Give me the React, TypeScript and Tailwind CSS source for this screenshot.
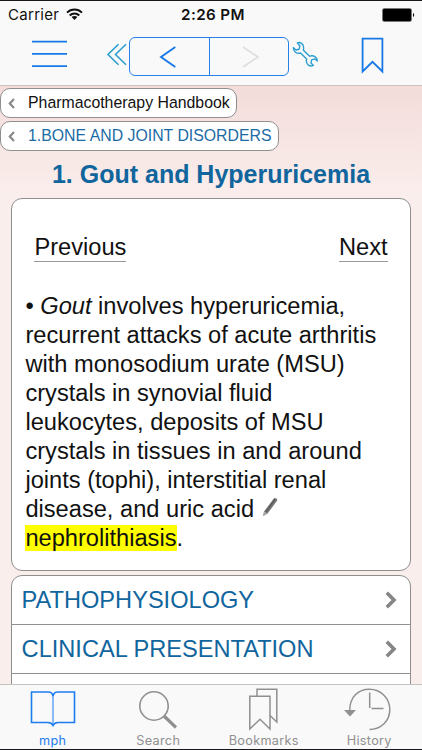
import type { ReactNode } from "react";

interface Crumb {
  label: string;
  className: string;
}

interface Tab {
  label: string;
  icon: ReactNode;
  active?: boolean;
}

const crumbs: Crumb[] = [
  { label: "Pharmacotherapy Handbook", className: "w-[237px] text-[#111]" },
  { label: "1.BONE AND JOINT DISORDERS", className: "w-[279px] text-[#1c6ba5]" },
];

const paragraph = [
  "recurrent attacks of acute arthritis",
  "with monosodium urate (MSU)",
  "crystals in synovial fluid",
  "leukocytes, deposits of MSU",
  "crystals in tissues in and around",
  "joints (tophi), interstitial renal",
];

const sections = ["PATHOPHYSIOLOGY", "CLINICAL PRESENTATION"];

const tabs: Tab[] = [
  {
    label: "mph",
    active: true,
    icon: (
      <svg width="46" height="36" viewBox="0 0 46 36" fill="none" stroke="currentColor" strokeWidth="1.6">
        <path d="M1.5 1H18.5C21 1 22.5 2.5 23 5C23.5 2.5 25 1 27.5 1H44.5V31.5H28C25 31.5 24 32.5 23 34.5C22 32.5 21 31.5 18 31.5H1.5Z" />
        <path d="M23 5V34" strokeWidth="1" />
      </svg>
    ),
  },
  {
    label: "Search",
    icon: (
      <svg className="mr-px mt-px" width="40" height="40" viewBox="0 0 40 40" fill="none" stroke="currentColor">
        <circle cx="16" cy="16" r="14.2" strokeWidth="1.6" />
        <path d="M26 26L38 37.5" strokeWidth="3.2" />
      </svg>
    ),
  },
  {
    label: "Bookmarks",
    icon: (
      <svg className="mr-[2px] mt-px" width="30" height="43" viewBox="0 0 30 43" fill="none" stroke="currentColor" strokeWidth="1.5">
        <path d="M1.8 8.2H22V41L12 31.2L1.8 41Z" />
        <path d="M9 8.2V1.2H28.8V34L22 27.5" />
      </svg>
    ),
  },
  {
    label: "History",
    icon: (
      <svg className="mr-[5px]" width="48" height="43" viewBox="0 0 48 43" fill="none" stroke="currentColor" strokeWidth="1.5">
        <path d="M6.8 22C6.8 9 15 1.3 26.5 1.3C38 1.3 46.8 10.5 46.8 21.5C46.8 33 38 41.5 26.5 41.5" />
        <path d="M26.7 4.5V20M28.5 20.5H40.5" />
        <path d="M1 22H13L7 28.5Z" fill="currentColor" stroke="none" />
      </svg>
    ),
  },
];

function StatusBar() {
  return (
    <div className="grid h-[29px] grid-cols-3 items-center pl-2 pr-[7px] font-[Inter,sans-serif] text-[#111]">
      <div className="flex items-center gap-[7px]">
        <span className="text-[15px] tracking-[0.3px]">Carrier</span>
        <svg className="-mt-0.5" width="17" height="13" viewBox="0 0 17 13" fill="none" stroke="currentColor" strokeWidth="2">
          <path d="M1 4.6C5.2 0.4 11.8 0.4 16 4.6" />
          <path d="M3.7 7.5C6.4 4.8 10.6 4.8 13.3 7.5" />
          <path d="M8.5 12L5.6 9.1C7.2 7.6 9.8 7.6 11.4 9.1Z" fill="currentColor" stroke="none" />
        </svg>
      </div>
      <span className="pl-[3px] text-center text-[15.2px] font-semibold tracking-[0.4px]">2:26 PM</span>
      <svg className="-mt-0.5 justify-self-end" width="33" height="14" viewBox="0 0 33 14">
        <rect x="0.5" y="0.5" width="29" height="13" rx="1.8" fill="#000" stroke="#777" strokeWidth="0.7" />
        <path d="M31 5V9C32.6 8.5 32.6 5.5 31 5Z" fill="#000" />
      </svg>
    </div>
  );
}

function NavBar() {
  return (
    <div className="flex h-[55px] items-start text-[#1878e8]">
      <svg className="ml-8 mt-[10px]" width="36" height="28" viewBox="0 0 36 28" stroke="currentColor" strokeWidth="1.8">
        <path d="M0 1.7H35M0 13.8H35M0 26.2H35" />
      </svg>
      <svg className="ml-[38px] mt-[13px] text-[#2c9fd0]" width="22" height="23" viewBox="0 0 22 23" fill="none" stroke="currentColor" strokeWidth="1.6">
        <path d="M12.5 1.2L2 11.5L12.5 21.8M20 1.2L9.5 11.5L20 21.8" />
      </svg>
      <div className="ml-px mt-[7px] flex h-[39px] w-[160px] rounded-[6px] border border-[#2680ea]">
        <div className="flex w-20 items-center justify-center border-r border-[#2680ea] pr-[3px]">
          <svg width="18" height="22" viewBox="0 0 18 22" fill="none" stroke="currentColor" strokeWidth="1.9">
            <path d="M16.3 1L2 11L16.3 21" />
          </svg>
        </div>
        <div className="flex flex-1 items-center justify-center pl-1 text-[#dedede]">
          <svg width="18" height="22" viewBox="0 0 18 22" fill="none" stroke="currentColor" strokeWidth="1.7">
            <path d="M1 1L16 11L1 21" />
          </svg>
        </div>
      </div>
      <svg className="ml-[3px] mt-[11px] text-[#2c9fd0]" width="28" height="28" viewBox="0 0 28 28" fill="none" stroke="currentColor" strokeWidth="1.4" strokeLinejoin="round">
        <path d="M5.3 1.8C8.6 0.7 12 3.2 11.7 7.2C11.7 8 11.5 8.5 11.2 9L17.6 15.2C21.6 13.7 25.3 16 25.4 20L22.6 17.9L19.6 18.8L19 21.9L21.4 24.4C17.7 26.2 14 23.4 14.3 19.5C14.4 18.9 14.5 18.6 14.7 18.1L8.5 12C4.6 13.2 1.2 10.5 1.3 6.6L4 9L7.1 8.2L7.9 5Z" />
      </svg>
      <svg className="ml-[41px] mt-[7px]" width="23" height="37" viewBox="0 0 23 37" fill="none" stroke="currentColor" strokeWidth="1.8">
        <path d="M1.6 1.6H21.4V34.5L11.5 24.8L1.6 34.5Z" />
      </svg>
    </div>
  );
}

function BackCrumb({ label, className }: Crumb) {
  return (
    <div
      className={`flex h-[30px] items-center rounded-[10px] border border-[#8f8f8f] bg-white pl-[7px] ${className}`}
    >
      <svg className="mr-[13px] shrink-0" width="7" height="11" viewBox="0 0 7 11" fill="none" stroke="#888" strokeWidth="2.2">
        <path d="M6 1L1.8 5.5L6 10" />
      </svg>
      <span className="whitespace-nowrap pb-px text-[15.85px] leading-none">{label}</span>
    </div>
  );
}

function Article() {
  return (
    <div className="h-[373px] rounded-[11px] border border-[#8f8f8f] bg-white px-[13.4px] text-[23.65px] leading-[29px]">
      <div className="flex justify-between pl-[9px] pr-[9px] pt-[34px]">
        <span className="h-[29px] border-b border-[#999]">Previous</span>
        <span className="h-[29px] border-b border-[#999]">Next</span>
      </div>
      <div className="whitespace-nowrap pt-[30px]">
        <p>
          • <i>Gout</i> involves hyperuricemia,
        </p>
        {paragraph.map((line) => (
          <p key={line}>{line}</p>
        ))}
        <p className="flex items-center">
          disease, and uric acid
          <svg className="mb-[5px] ml-[8px]" width="17" height="20" viewBox="0 0 17 20">
            <path d="M11.8 1.4C13 0.4 15.6 1.6 15.2 3.4L5.6 16.6L1.2 19L2 14.6Z" fill="#777" />
            <path d="M12.8 2.5L4 14.8" stroke="#5c5c5c" strokeWidth="1.4" />
            <path d="M2 14.6L5.6 16.6L1.2 19Z" fill="#aaa" />
          </svg>
        </p>
        <p>
          <span className="bg-[#ffff00]">nephrolithiasis</span>.
        </p>
      </div>
    </div>
  );
}

function TabBar() {
  return (
    <div className="grid h-[65px] shrink-0 grid-cols-4 border-t border-[#c4c4c4] bg-[#f9f9f9]">
      {tabs.map(({ label, icon, active }) => (
        <div
          key={label}
          className={`flex flex-col items-center ${active ? "text-[#1c7df0]" : "text-[#909090]"}`}
        >
          <div className="flex h-[48px] items-center justify-center">{icon}</div>
          <span className="font-[Inter,sans-serif] text-[12.7px] leading-[15px] tracking-[0.3px]">{label}</span>
        </div>
      ))}
    </div>
  );
}

export default function App() {
  return (
    <div className="flex h-[750px] w-[422px] flex-col overflow-hidden border-y border-[#17171c] bg-[#f9f9f9] font-['Liberation_Sans',Arial,sans-serif] text-[#111]">
      <header className="h-[85px] shrink-0 border-b border-[#cdbfc0] bg-[#f9f9f9]">
        <StatusBar />
        <NavBar />
      </header>
      <main className="min-h-0 flex-1 overflow-hidden bg-linear-to-b from-[#f3dcda] to-[#faeeec] to-[110px] pt-[2px]">
        <div className="flex flex-col gap-[3px]">
          {crumbs.map((crumb) => (
            <BackCrumb key={crumb.label} {...crumb} />
          ))}
        </div>
        <h1 className="h-[47px] pt-[9px] text-center text-[25px] font-bold leading-[29px] text-[#10659d]">
          1. Gout and Hyperuricemia
        </h1>
        <div className="flex flex-col gap-1 px-[11px]">
          <Article />
          <ul className="h-[150px] rounded-t-[11px] border border-[#8f8f8f] bg-white">
            {sections.map((section) => (
              <li
                key={section}
                className="flex h-[49px] items-center justify-between border-b border-[#8f8f8f] pl-[9.6px] pr-[13px] pt-px text-[23.6px] text-[#10659d]"
              >
                {section}
                <svg className="mb-0.5" width="12" height="18" viewBox="0 0 12 18" fill="none" stroke="#858585" strokeWidth="3.6">
                  <path d="M1.8 1.8L9 9L1.8 16.2" />
                </svg>
              </li>
            ))}
          </ul>
        </div>
      </main>
      <TabBar />
    </div>
  );
}
